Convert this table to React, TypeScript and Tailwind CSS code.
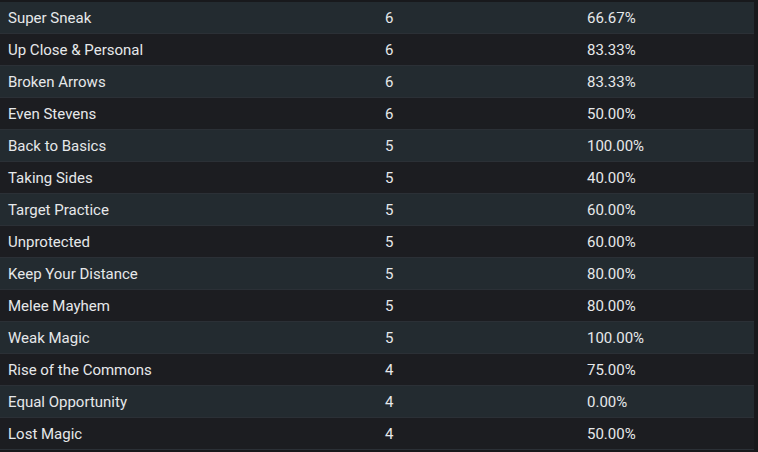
import React from "react";

const rows: [string, string, string][] = [
  ["Super Sneak", "6", "66.67%"],
  ["Up Close & Personal", "6", "83.33%"],
  ["Broken Arrows", "6", "83.33%"],
  ["Even Stevens", "6", "50.00%"],
  ["Back to Basics", "5", "100.00%"],
  ["Taking Sides", "5", "40.00%"],
  ["Target Practice", "5", "60.00%"],
  ["Unprotected", "5", "60.00%"],
  ["Keep Your Distance", "5", "80.00%"],
  ["Melee Mayhem", "5", "80.00%"],
  ["Weak Magic", "5", "100.00%"],
  ["Rise of the Commons", "4", "75.00%"],
  ["Equal Opportunity", "4", "0.00%"],
  ["Lost Magic", "4", "50.00%"],
];

export default function App() {
  return (
    <div
      className="w-[758px] h-[452px] bg-[#18191c] pt-[2px] pr-[4px] overflow-hidden"
      style={{ fontFamily: "Roboto, 'Liberation Sans', sans-serif" }}
    >
      <div className="flex flex-col">
        {rows.map((r, i) => (
          <div
            key={i}
            className={`flex h-[32px] items-center border-b border-[#2b3036] text-[15px] leading-[20px] text-[#e6e8ea] ${
              i % 2 === 0 ? "bg-[#232b30]" : "bg-[#1c1d21]"
            }`}
          >
            <div className="w-[377px] pl-[8px] pt-[1px]">{r[0]}</div>
            <div className="w-[202px] pl-[8px] pt-[1px]">{r[1]}</div>
            <div className="flex-1 pl-[8px] pt-[1px]">{r[2]}</div>
          </div>
        ))}
      </div>
    </div>
  );
}
